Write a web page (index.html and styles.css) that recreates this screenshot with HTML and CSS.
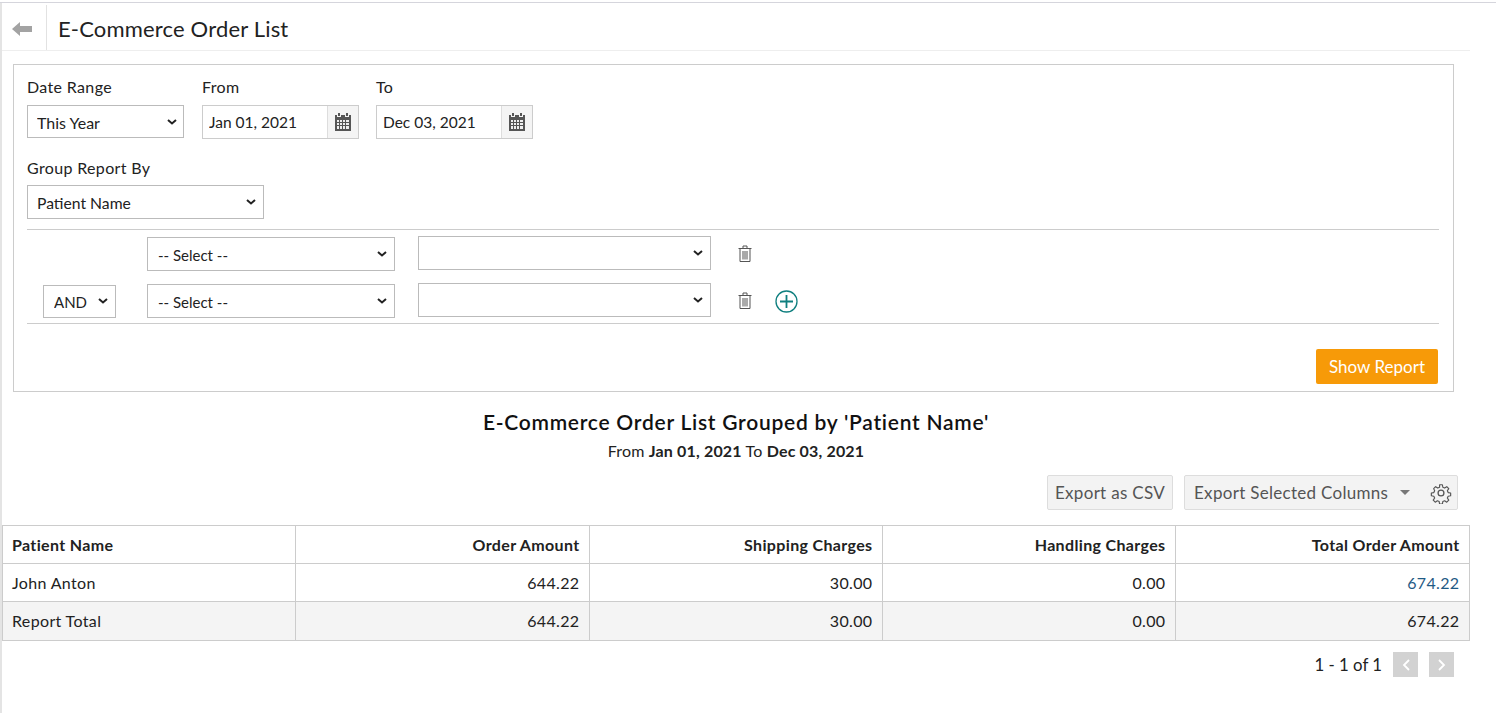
FILE: index.html
```html
<!DOCTYPE html>
<html lang="en">
<head>
    <meta charset="UTF-8">
    <title>E-Commerce Order List</title>
    <link rel="stylesheet" href="styles.css">
</head>
<body>
    <div class="page">
        <!-- Page Header -->
        <div class="page-header">
            <a class="back-btn" href="#">
                <svg width="20" height="14" viewBox="0 0 20 14"><path d="M0 7 8 0V4H20V10H8V14Z" fill="#a3a3a3"/></svg>
            </a>
            <h1>E-Commerce Order List</h1>
        </div>

        <!-- Filter Box -->
        <div class="filter-box">
            <div class="field-row">
                <div class="field field-range">
                    <label>Date Range</label>
                    <select class="select-range"><option>This Year</option></select>
                </div>
                <div class="field field-date">
                    <label>From</label>
                    <div class="date-input">
                        <input type="text" value="Jan 01, 2021">
                        <span class="date-icon">
                            <svg width="18" height="18" viewBox="0 0 18 18"><path fill="#555" d="M4 0h2v3H4zM12 0h2v3h-2zM1 2h2v2h4V2h4v2h4V2h2v16H1z"/><path fill="#eee" d="M3 7h2v2H3zM6 7h2v2H6zM9 7h2v2H9zM12 7h3v2h-3zM3 10h2v2H3zM6 10h2v2H6zM9 10h2v2H9zM12 10h3v2h-3zM3 13h2v3H3zM6 13h2v3H6zM9 13h2v3H9zM12 13h3v3h-3z"/></svg>
                        </span>
                    </div>
                </div>
                <div class="field field-date">
                    <label>To</label>
                    <div class="date-input">
                        <input type="text" value="Dec 03, 2021">
                        <span class="date-icon">
                            <svg width="18" height="18" viewBox="0 0 18 18"><path fill="#555" d="M4 0h2v3H4zM12 0h2v3h-2zM1 2h2v2h4V2h4v2h4V2h2v16H1z"/><path fill="#eee" d="M3 7h2v2H3zM6 7h2v2H6zM9 7h2v2H9zM12 7h3v2h-3zM3 10h2v2H3zM6 10h2v2H6zM9 10h2v2H9zM12 10h3v2h-3zM3 13h2v3H3zM6 13h2v3H6zM9 13h2v3H9zM12 13h3v3h-3z"/></svg>
                        </span>
                    </div>
                </div>
            </div>

            <div class="field field-group">
                <label>Group Report By</label>
                <select class="select-group"><option>Patient Name</option></select>
            </div>

            <!-- Criteria Rows -->
            <div class="criteria">
                <div class="criteria-row">
                    <span class="criteria-join"></span>
                    <select class="select-column"><option>-- Select --</option></select>
                    <select class="select-value"><option></option></select>
                    <a class="trash-btn" href="#">
                        <svg width="14" height="17" viewBox="0 0 14 17" fill="none" stroke="#555"><path d="M.5 3.5h13M5 3V1h4v2M2 4v12.500h10V4M5 6v8.500M7 6v8.500M9 6v8.500"/></svg>
                    </a>
                </div>
                <div class="criteria-row">
                    <span class="criteria-join"><select class="select-and"><option>AND</option></select></span>
                    <select class="select-column"><option>-- Select --</option></select>
                    <select class="select-value"><option></option></select>
                    <a class="trash-btn" href="#">
                        <svg width="14" height="17" viewBox="0 0 14 17" fill="none" stroke="#555"><path d="M.5 3.5h13M5 3V1h4v2M2 4v12.500h10V4M5 6v8.500M7 6v8.500M9 6v8.500"/></svg>
                    </a>
                    <a class="add-btn" href="#">
                        <svg width="23" height="23" viewBox="0 0 23 23" fill="none" stroke="#0f7f7f"><circle cx="11.500" cy="11.500" r="10.500" stroke-width="1.300"/><path d="M11.500 5v13M5 11.500h13" stroke-width="1.800"/></svg>
                    </a>
                </div>
            </div>

            <div class="filter-actions">
                <button class="btn-show">Show Report</button>
            </div>
        </div>

        <!-- Report Title -->
        <h2 class="report-title">E-Commerce Order List Grouped by 'Patient Name'</h2>
        <p class="report-range">From <b>Jan 01, 2021</b> To <b>Dec 03, 2021</b></p>

        <!-- Export Buttons -->
        <div class="export-bar">
            <button class="btn-export">Export as CSV</button>
            <div class="btn-export export-columns">
                <span>Export Selected Columns</span>
                <i class="caret"></i>
                <i class="sep"></i>
                <svg width="22" height="22" viewBox="0 0 24 24" fill="none" stroke="#555" stroke-width="1.400" stroke-linejoin="round"><circle cx="12" cy="12" r="3.200"/><path d="M10.300 2h3.400l.5 3 2.200 1 2.600-1.700 2.400 2.400-1.700 2.600 1 2.200 3 .5v3.400l-3 .5-1 2.200 1.700 2.600-2.400 2.400-2.600-1.700-2.200 1-.5 3h-3.400l-.5-3-2.200-1-2.600 1.700-2.400-2.400 1.700-2.600-1-2.200-3-.5v-3.400l3-.5 1-2.200L3.100 6.700l2.400-2.400 2.600 1.700 2.200-1z" transform="translate(1.200 1.200) scale(.9)"/></svg>
            </div>
        </div>

        <!-- Report Table -->
        <table class="report-table">
            <thead>
                <tr>
                    <th class="col-name">Patient Name</th>
                    <th class="col-num col-order">Order Amount</th>
                    <th class="col-num">Shipping Charges</th>
                    <th class="col-num">Handling Charges</th>
                    <th class="col-num col-last">Total Order Amount</th>
                </tr>
            </thead>
            <tbody>
                <tr>
                    <td>John Anton</td>
                    <td class="num">644.22</td>
                    <td class="num">30.00</td>
                    <td class="num">0.00</td>
                    <td class="num"><a href="#">674.22</a></td>
                </tr>
                <tr class="total-row">
                    <td>Report Total</td>
                    <td class="num">644.22</td>
                    <td class="num">30.00</td>
                    <td class="num">0.00</td>
                    <td class="num">674.22</td>
                </tr>
            </tbody>
        </table>

        <!-- Pagination -->
        <div class="pager">
            <span class="pager-text">1 - 1 of 1</span>
            <a class="pager-btn" href="#"><svg width="8" height="12" viewBox="0 0 8 12" fill="none" stroke="#fff" stroke-width="1.800"><path d="M7 1 2 6l5 5"/></svg></a>
            <a class="pager-btn" href="#"><svg width="8" height="12" viewBox="0 0 8 12" fill="none" stroke="#fff" stroke-width="1.800"><path d="M1 1l5 5-5 5"/></svg></a>
        </div>
    </div>
</body>
</html>
```

FILE: styles.css
```css
html, body {
    margin: 0;
    padding: 0;
    height: 100%;
    overflow: hidden;
}

body {
    font-family: Lato, "Open Sans", sans-serif;
    font-size: 16px;
    color: #222;
    background-color: #fff;
}

.page {
    height: 711px;
    margin-top: 2px;
    padding-left: 2px;
    box-sizing: border-box;
    border-top: 1px solid #d5d5dc;
    box-shadow: inset 2px 0 0 #e4e4e4;
}

/* Header */
.page-header {
    width: 1468px;
    height: 48px;
    box-sizing: border-box;
    display: flex;
    align-items: stretch;
    border-bottom: 1px solid #eee;
}

.back-btn {
    width: 45px;
    padding-left: 10px;
    padding-top: 3px;
    box-sizing: border-box;
    display: flex;
    align-items: center;
    border-right: 1px solid #e2e2e2;
    margin-top: 2px;
}

.page-header h1 {
    margin: 0 0 0 11px;
    font-size: 22px;
    font-weight: 400;
    line-height: 51px;
    letter-spacing: .17px;
    color: #222;
}

/* Filter box */
.filter-box {
    width: 1441px;
    height: 328px;
    margin: 13px 0 0 11px;
    padding: 12px 14px 0 13px;
    box-sizing: border-box;
    border: 1px solid #ccc;
}

.field-row {
    display: flex;
}

.field label {
    display: block;
    height: 28px;
    line-height: 20px;
    letter-spacing: .35px;
    color: #222;
}

.field-range {
    width: 175px;
}

.field-date {
    width: 174px;
}

.field-group {
    margin-top: 19px;
}

.field-group label {
    height: 27px;
}

select {
    appearance: none;
    font-family: inherit;
    font-size: 15px;
    color: #222;
    background: #fff url("data:image/svg+xml,%3Csvg xmlns='http://www.w3.org/2000/svg' width='10' height='6'%3E%3Cpath d='M1 1l4 3.500L9 1' fill='none' stroke='%23222' stroke-width='2'/%3E%3C/svg%3E") no-repeat right 7px center;
    border: 1px solid #bbb;
    border-radius: 0;
    padding: 1px 20px 0 10px;
    box-sizing: border-box;
}

.select-range {
    width: 157px;
    height: 33px;
    padding-left: 9px;
    font-size: 16px;
    background-position: right 6px center;
}

.select-group {
    width: 237px;
    height: 34px;
    padding-left: 9px;
    font-size: 15.700px;
}

.date-input {
    display: flex;
    width: 157px;
    height: 34px;
    box-sizing: border-box;
    border: 1px solid #ccc;
}

.date-input input {
    flex: 1;
    min-width: 0;
    border: none;
    outline: none;
    padding: 0 6px;
    font-family: inherit;
    font-size: 15.500px;
    color: #222;
}

.date-icon {
    width: 31px;
    padding-right: 1px;
    box-sizing: border-box;
    display: flex;
    align-items: center;
    justify-content: center;
    background-color: #f4f4f4;
    border-left: 1px solid #ddd;
}

/* Criteria */
.criteria {
    margin-top: 10px;
    height: 95px;
    box-sizing: border-box;
    padding-top: 7px;
    border-top: 1px solid #ccc;
    border-bottom: 1px solid #ccc;
}

.criteria-row {
    display: flex;
    align-items: center;
    height: 34px;
    margin-bottom: 13px;
}

.criteria-join {
    width: 120px;
    padding-left: 16px;
    box-sizing: border-box;
}

.select-and {
    width: 73px;
    height: 33px;
}

.select-column {
    width: 248px;
    height: 34px;
}

.select-value {
    width: 293px;
    height: 34px;
    margin-left: 23px;
    margin-bottom: 2px;
}

.trash-btn {
    margin-left: 27px;
    margin-bottom: 2px;
    display: flex;
}

.add-btn {
    margin-left: 23px;
    display: flex;
}

.filter-actions {
    display: flex;
    justify-content: flex-end;
    margin-top: 25px;
}

.btn-show {
    width: 122px;
    height: 35px;
    margin-right: 1px;
    background-color: #f79a08;
    color: #fff;
    border: none;
    border-radius: 2px;
    font-family: inherit;
    font-size: 17px;
}

/* Report title */
.report-title {
    width: 1468px;
    margin: 17px 0 0;
    text-align: center;
    font-size: 21px;
    line-height: 26px;
    font-weight: 600;
    letter-spacing: .74px;
    color: #111;
}

.report-range {
    width: 1468px;
    margin: 6px 0 0;
    text-align: center;
    font-size: 16px;
    line-height: 20px;
    letter-spacing: .17px;
    color: #222;
}

.report-range b {
    font-weight: 700;
}

/* Export buttons */
.export-bar {
    width: 1456px;
    margin-top: 14px;
    display: flex;
    justify-content: flex-end;
    gap: 11px;
}

.btn-export {
    height: 35px;
    box-sizing: border-box;
    background-color: #f3f3f3;
    border: 1px solid #ddd;
    border-radius: 2px;
    color: #555;
    font-family: inherit;
    font-size: 17px;
    letter-spacing: .3px;
    padding: 0 7px;
    white-space: nowrap;
}

.export-columns {
    width: 274px;
    display: flex;
    align-items: center;
    padding-left: 9px;
}

.caret {
    margin-left: 12px;
    border-left: 5.500px solid transparent;
    border-right: 5.500px solid transparent;
    border-top: 5px solid #777;
}

.sep {
    margin-left: 12px;
    width: 1px;
    height: 19px;
    background-color: #444;
}

.export-columns svg {
    margin-left: 8px;
    flex-shrink: 0;
}

/* Table */
.report-table {
    width: 1468px;
    margin-top: 15px;
    table-layout: fixed;
    border-collapse: collapse;
    font-size: 16px;
}

.report-table th,
.report-table td {
    height: 38px;
    padding: 0 9.500px 0 9px;
    box-sizing: border-box;
    border: 1px solid #ccc;
    letter-spacing: .35px;
}

.report-table th {
    font-weight: 700;
    color: #222;
}

.col-name {
    width: 293px;
    text-align: left;
}

.col-order {
    width: 294px;
}

.col-num {
    width: 293px;
    text-align: right;
}

.col-last {
    width: 294px;
}

.report-table .col-order {
    width: 294px;
}

.num {
    text-align: right;
}

.report-table a {
    color: #1f5a85;
    text-decoration: none;
}

.report-table .total-row td {
    height: 39px;
    padding-bottom: 2px;
    background-color: #f4f4f4;
}

/* Pagination */
.pager {
    width: 1452px;
    margin-top: 11px;
    display: flex;
    justify-content: flex-end;
    align-items: center;
}

.pager-text {
    font-size: 16.800px;
    color: #222;
    margin-right: 11px;
}

.pager-btn {
    width: 25px;
    height: 25px;
    margin-left: 11px;
    display: flex;
    align-items: center;
    justify-content: center;
    background-color: #d2d2d2;
}

.pager-text + .pager-btn {
    margin-left: 0;
}
```
